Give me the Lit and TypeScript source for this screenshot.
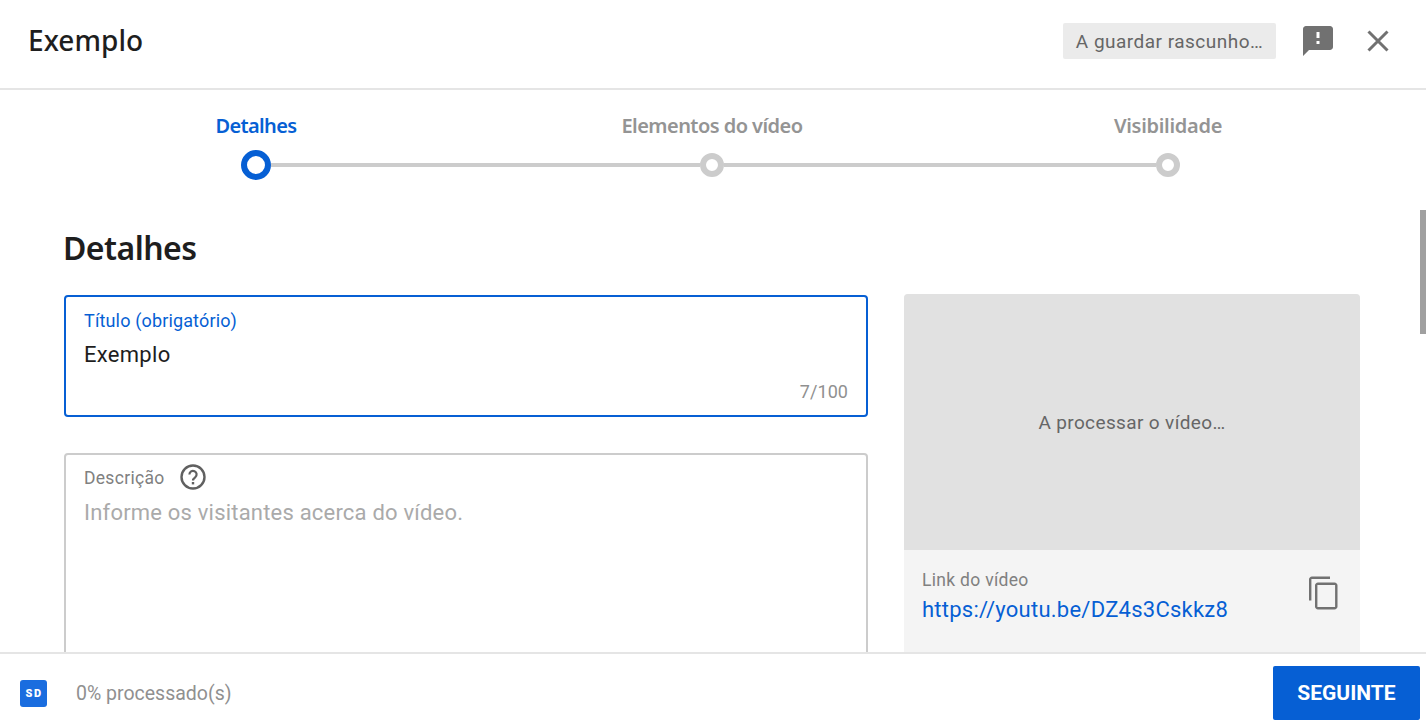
import { LitElement, html, css } from "lit";
import { customElement } from "lit/decorators.js";

const steps = [
  { label: "Detalhes", active: true },
  { label: "Elementos do vídeo", active: false },
  { label: "Visibilidade", active: false },
];

@customElement("app-root")
export class AppRoot extends LitElement {
  static styles = css`
    :host { display: flex; flex-direction: column; height: 727px; overflow: hidden; background: #fff; font-family: Roboto, sans-serif; position: relative; color: #0d0d0d; }
    .head { flex: none; display: flex; align-items: center; padding: 0 33px 6px 28px; box-sizing: border-box; border-bottom: 2px solid #e5e5e5; height: 90px; }
    .head h1 { margin: 0 0 2px; flex: 1; font: 500 28px "Noto Sans", sans-serif; color: #1e1e1e; letter-spacing: 0.05px; }
    .chip { width: 213px; height: 36px; box-sizing: border-box; background: #ebebeb; border-radius: 2px; display: flex; align-items: center; justify-content: center; font-size: 19px; color: #666; letter-spacing: 0.48px; white-space: nowrap; }
    .fb { width: 36px; height: 36px; margin-left: 24px; display: block; fill: #717171; }
    .x { width: 30px; height: 30px; margin-left: 27px; display: block; stroke: #717171; stroke-width: 3; fill: none; }
    .stepper { flex: none; display: grid; grid-template-columns: repeat(3, 456px); padding: 0 30px 0 28px; margin-top: 23px; }
    .step { display: flex; flex-direction: column; align-items: stretch; }
    .step span { text-align: center; font: 600 20px/26px "Noto Sans", sans-serif; color: #949494; letter-spacing: -0.55px; }
    .step:last-child span { letter-spacing: -0.3px; }
    .step.active span { color: #065fd4; letter-spacing: -0.65px; }
    .track { display: flex; align-items: center; height: 30px; margin-top: 11px; }
    .seg { flex: 1; height: 4px; background: #ccc; }
    .step:first-child .seg:first-child, .step:last-child .seg:last-child { background: transparent; }
    .node { width: 24px; height: 24px; box-sizing: border-box; border: 6px solid #ccc; border-radius: 50%; flex: none; background: #fff; }
    .step.active .node { width: 30px; height: 30px; border-color: #065fd4; }
    .body { flex: 1; min-height: 0; overflow: hidden; padding: 0 66px 0 64px; }
    h2 { margin: 48px 0 0 -1px; font: 600 32px/40px "Noto Sans", sans-serif; color: #1e1e1e; letter-spacing: -0.55px; }
    .cols { display: grid; grid-template-columns: 804px 456px; column-gap: 36px; margin-top: 26px; }
    .left { display: flex; flex-direction: column; gap: 36px; padding-top: 1px; }
    .field { border: 2px solid #ccc; border-radius: 4px; box-sizing: border-box; padding: 0 18px; position: relative; }
    .title-f { height: 122px; border-color: #065fd4; padding-top: 14px; }
    .lab { font-size: 18px; line-height: 20px; color: #065fd4; letter-spacing: 0.15px; }
    .val { font-size: 22px; line-height: 28px; margin-top: 10px; color: #1e1e1e; letter-spacing: 0.3px; }
    .count { position: absolute; right: 18px; bottom: 12px; font-size: 18px; line-height: 22px; color: #909090; letter-spacing: 0.05px; }
    .desc-f { height: 300px; padding-top: 9px; }
    .desc-lab { display: flex; align-items: center; gap: 14px; font-size: 17.5px; line-height: 26px; color: #808080; letter-spacing: 0.3px; }
    .help { width: 28px; height: 28px; display: block; margin-top: -1px; }
    .ph { font-size: 22px; line-height: 30px; margin-top: 7px; color: #aaa; letter-spacing: 0.2px; }
    .preview { border-radius: 4px 4px 0 0; overflow: hidden; background: #f4f4f4; height: 400px; }
    .proc { height: 256px; background: #e1e1e1; display: flex; align-items: center; justify-content: center; font-size: 19px; color: #666; letter-spacing: 0.37px; }
    .link { display: flex; padding: 19px 18px 0; justify-content: space-between; }
    .link small { display: block; font-size: 17.5px; line-height: 22px; color: #808080; letter-spacing: 0.3px; }
    .link a { display: block; font-size: 22px; line-height: 30px; margin-top: 4px; color: #065fd4; letter-spacing: 0.25px; }
    .copy { width: 36px; height: 36px; fill: #717171; display: block; margin: 5.5px 0 0 0; }
    .foot { flex: none; height: 75px; box-sizing: border-box; border-top: 2px solid #e5e5e5; display: flex; align-items: center; padding: 5px 6px 0 20px; background: #fff; }
    .sd { width: 27px; height: 27px; border-radius: 3px; background: #1a6ddf; color: #fff; display: flex; align-items: center; justify-content: center; font: 900 11px/1 Roboto, sans-serif; letter-spacing: 1.6px; padding-left: 1px; box-sizing: border-box; }
    .pct { flex: 1; margin-left: 29px; font-size: 19.5px; color: #909090; }
    .btn { width: 147px; height: 54px; background: #065fd4; color: #fff; border: 0; border-radius: 2px; font: 700 21px Roboto, sans-serif; padding: 0; }
    .thumb { position: absolute; right: 0; top: 210px; width: 6px; height: 124px; background: #a0a0a0; }
  `;

  render() {
    return html`
      <div class="head">
        <h1>Exemplo</h1>
        <div class="chip">A guardar rascunho…</div>
        <svg class="fb" viewBox="0 0 24 24"><path d="M20 2H4c-1.1 0-2 .9-2 2v18l4-4h14c1.1 0 2-.9 2-2V4c0-1.1-.9-2-2-2zm-7 12h-2v-2h2v2zm0-4h-2V6h2v4z"/></svg>
        <svg class="x" viewBox="0 0 30 30"><path d="M5.500 5.500 24.500 24.500M24.500 5.500 5.500 24.500"/></svg>
      </div>
      <div class="stepper">
        ${steps.map(
          (s) => html`<div class="step ${s.active ? "active" : ""}">
            <span>${s.label}</span>
            <div class="track"><div class="seg"></div><div class="node"></div><div class="seg"></div></div>
          </div>`
        )}
      </div>
      <div class="body">
        <h2>Detalhes</h2>
        <div class="cols">
          <div class="left">
            <div class="field title-f">
              <div class="lab">Título (obrigatório)</div>
              <div class="val">Exemplo</div>
              <div class="count">7/100</div>
            </div>
            <div class="field desc-f">
              <div class="desc-lab">Descrição
                <svg class="help" viewBox="0 0 28 28" fill="none"><circle cx="14" cy="14" r="11.500" stroke="#606060" stroke-width="2.400"/><path d="M10.400 11.400a3.600 3.600 0 1 1 5.900 2.800c-1.300 1-2.300 1.700-2.300 3.300" stroke="#606060" stroke-width="2.200"/><rect x="12.800" y="19" width="2.400" height="2.400" fill="#606060"/></svg>
              </div>
              <div class="ph">Informe os visitantes acerca do vídeo.</div>
            </div>
          </div>
          <div class="preview">
            <div class="proc">A processar o vídeo…</div>
            <div class="link">
              <div>
                <small>Link do vídeo</small>
                <a>https://youtu.be/DZ4s3Cskkz8</a>
              </div>
              <svg class="copy" viewBox="0 0 24 24"><path d="M16 1H4c-1.100 0-2 .9-2 2v14h1.600V2.600H16V1zm3 4H8c-1.100 0-2 .9-2 2v14c0 1.100.9 2 2 2h11c1.100 0 2-.9 2-2V7c0-1.100-.9-2-2-2zm.4 16.400H7.600V6.600h11.800v14.800z"/></svg>
            </div>
          </div>
        </div>
      </div>
      <div class="foot">
        <div class="sd">SD</div>
        <div class="pct">0% processado(s)</div>
        <button class="btn">SEGUINTE</button>
      </div>
      <div class="thumb"></div>
    `;
  }
}
